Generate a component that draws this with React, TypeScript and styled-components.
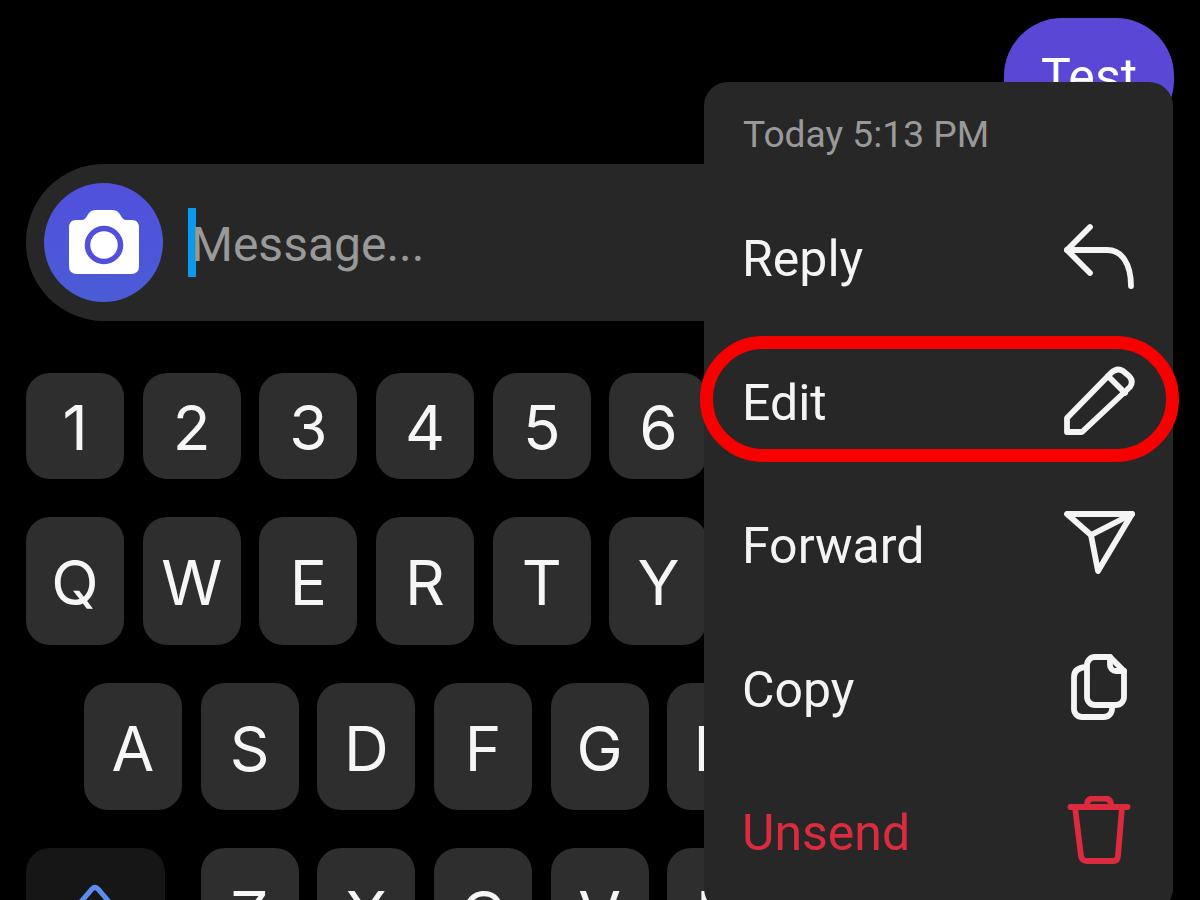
import React from "react";
import styled, { createGlobalStyle } from "styled-components";

const GlobalStyle = createGlobalStyle`
  html, body {
    margin: 0;
    padding: 0;
    background: #000;
  }
  body {
    font-family: Roboto, "Liberation Sans", sans-serif;
  }
`;

const MENU_ITEMS = [
  {
    label: "Reply",
    paths: ["M3 28 H43 C58 28 67 42 67 64", "M26 5 L3 28 L26 51"],
  },
  {
    label: "Edit",
    paths: [
      "M3 52 L47 7 Q53 1 59 5 L65 10 Q70 15 66 21 L18 66 H3 Z",
      "M44 10 L61 27",
    ],
  },
  {
    label: "Forward",
    paths: ["M3 5 H68 L34 62 L27 26 Z", "M27 26 L68 5"],
  },
  {
    label: "Copy",
    paths: [
      "M31 4 H46 L60 18 V44 a8 8 0 0 1 -8 8 H31 a8 8 0 0 1 -8 -8 V12 a8 8 0 0 1 8 -8 Z",
      "M46 4 V12 a6 6 0 0 0 6 6 H60",
      "M22 14 Q10 15 10 24 V56 a8 8 0 0 0 8 8 H40 a8 8 0 0 0 8 -8 V52",
    ],
  },
  {
    label: "Unsend",
    danger: true,
    paths: [
      "M6.5 11 H63.5",
      "M23 9 Q23 2.5 29 2.5 H41 Q47 2.5 47 9",
      "M11 11 L17 60 Q18 65 23 65 H49 Q54 65 54 60 L58 11",
    ],
  },
];

const App = () => {
  return (
    <Page>
      <GlobalStyle />
      <BubbleRow>
        <Bubble>Test</Bubble>
      </BubbleRow>

      <Composer>
        <CameraButton>
          <svg width="72" height="65" viewBox="0 0 72 65">
            <path
              d="M8 10 H14 Q17 10 19 6 Q22 0 27 0 H45 Q50 0 53 6 Q55 10 58 10 H64 Q71 10 71 18 V56 Q71 64 63 64 H9 Q1 64 1 56 V18 Q1 10 8 10 Z"
              fill="#fff"
            />
            <circle cx="36" cy="35" r="16.5" fill="#fff" stroke="#4f50dc" strokeWidth="5.5" />
          </svg>
        </CameraButton>
        <Caret />
        <Placeholder>Message...</Placeholder>
      </Composer>

      <Keyboard>
        <KeyRow $height={106}>
          {["1", "2", "3", "4", "5", "6"].map((k) => (
            <Key key={k}>{k}</Key>
          ))}
        </KeyRow>
        <KeyRow $height={128}>
          {["Q", "W", "E", "R", "T", "Y"].map((k) => (
            <Key key={k}>{k}</Key>
          ))}
        </KeyRow>
        <KeyRow $height={127} $indent={58}>
          {["A", "S", "D", "F", "G", "H"].map((k) => (
            <Key key={k}>{k}</Key>
          ))}
        </KeyRow>
        <KeyRow $height={127}>
          <ShiftKey>
            <svg width="48" height="40" viewBox="0 0 48 40">
              <path
                d="M2 32 L21 10 Q24 7 27 10 L46 32"
                fill="none"
                stroke="#5b8def"
                strokeWidth="5"
                strokeLinejoin="round"
              />
            </svg>
          </ShiftKey>
          {["Z", "X", "C", "V", "B"].map((k) => (
            <Key key={k}>{k}</Key>
          ))}
        </KeyRow>
      </Keyboard>

      <Menu>
        <MenuTime>Today 5:13 PM</MenuTime>
        {MENU_ITEMS.map((item) => (
          <MenuRow key={item.label} $danger={item.danger}>
            <MenuLabel>{item.label}</MenuLabel>
            <svg width="72" height="72" viewBox="0 0 72 72">
              {item.paths.map((d) => (
                <path
                  key={d}
                  d={d}
                  fill="none"
                  stroke="currentColor"
                  strokeWidth="5.8"
                  strokeLinecap="round"
                  strokeLinejoin="round"
                />
              ))}
            </svg>
          </MenuRow>
        ))}
      </Menu>

      <Highlight />
    </Page>
  );
};

const Page = styled.div`
  position: relative;
  width: 1200px;
  height: 900px;
  overflow: hidden;
  background: #000;
  display: flex;
  flex-direction: column;
  box-sizing: border-box;
  padding: 18px 0 0 26px;
`;

const BubbleRow = styled.div`
  display: flex;
  justify-content: flex-end;
  padding-right: 26px;
  height: 120px;
  flex-shrink: 0;
`;

const Bubble = styled.div`
  width: 170px;
  height: 120px;
  box-sizing: border-box;
  border-radius: 58px;
  background: #5a47d6;
  color: #fff;
  font-size: 50px;
  line-height: 58px;
  padding-top: 30px;
  text-align: center;
`;

const Composer = styled.div`
  display: flex;
  align-items: center;
  flex-shrink: 0;
  width: 1000px;
  height: 157px;
  margin-top: 26px;
  padding-left: 18px;
  box-sizing: border-box;
  border-radius: 78px 0 0 78px;
  background: #272727;
`;

const CameraButton = styled.div`
  display: flex;
  align-items: center;
  justify-content: center;
  width: 119px;
  height: 119px;
  border-radius: 50%;
  background: linear-gradient(180deg, #5150dc, #4a5cd6);
`;

const Caret = styled.div`
  width: 8px;
  height: 69px;
  margin-left: 25px;
  background: #0a9af0;
`;

const Placeholder = styled.div`
  margin-left: -5px;
  padding-top: 4px;
  color: #999;
  font-size: 48px;
  line-height: 56px;
`;

const Keyboard = styled.div`
  display: flex;
  flex-direction: column;
  gap: 38px;
  margin-top: 52px;
`;

const KeyRow = styled.div<{ $height: number; $indent?: number }>`
  display: flex;
  gap: 18.7px;
  height: ${({ $height }) => $height}px;
  padding-left: ${({ $indent }) => $indent ?? 0}px;
  flex-shrink: 0;
`;

const Key = styled.div`
  display: flex;
  align-items: center;
  justify-content: center;
  width: 98px;
  flex-shrink: 0;
  box-sizing: border-box;
  padding-top: 3px;
  border-radius: 24px;
  background: #2e2e2e;
  color: #f6f6f6;
  font-family: Inter, "Liberation Sans", sans-serif;
  font-size: 62px;
  font-weight: 400;
`;

const ShiftKey = styled.div`
  display: flex;
  justify-content: center;
  align-items: flex-start;
  width: 138.5px;
  margin-right: 17.4px;
  flex-shrink: 0;
  padding-top: 31px;
  box-sizing: border-box;
  border-radius: 24px;
  background: #161616;
`;

const Menu = styled.div`
  position: absolute;
  left: 704px;
  top: 82px;
  width: 469px;
  height: 830px;
  box-sizing: border-box;
  border-radius: 24px;
  background: #272727;
  display: flex;
  flex-direction: column;
`;

const MenuTime = styled.div`
  height: 104.5px;
  box-sizing: border-box;
  padding: 30px 0 0 39px;
  color: #999;
  font-size: 37.2px;
  line-height: 44px;
`;

const MenuRow = styled.div<{ $danger?: boolean }>`
  display: flex;
  align-items: center;
  justify-content: space-between;
  height: 143.5px;
  flex-shrink: 0;
  padding: 0 37px 0 38px;
  color: ${({ $danger }) => ($danger ? "#dc2b3e" : "#f4f4f4")};
  font-size: 50px;
`;

const MenuLabel = styled.span`
  padding-top: 2px;
`;

const Highlight = styled.div`
  position: absolute;
  left: 700px;
  top: 336px;
  width: 479px;
  height: 126px;
  box-sizing: border-box;
  border: 13px solid #f70000;
  border-radius: 63px;
  pointer-events: none;
`;

export default App;
